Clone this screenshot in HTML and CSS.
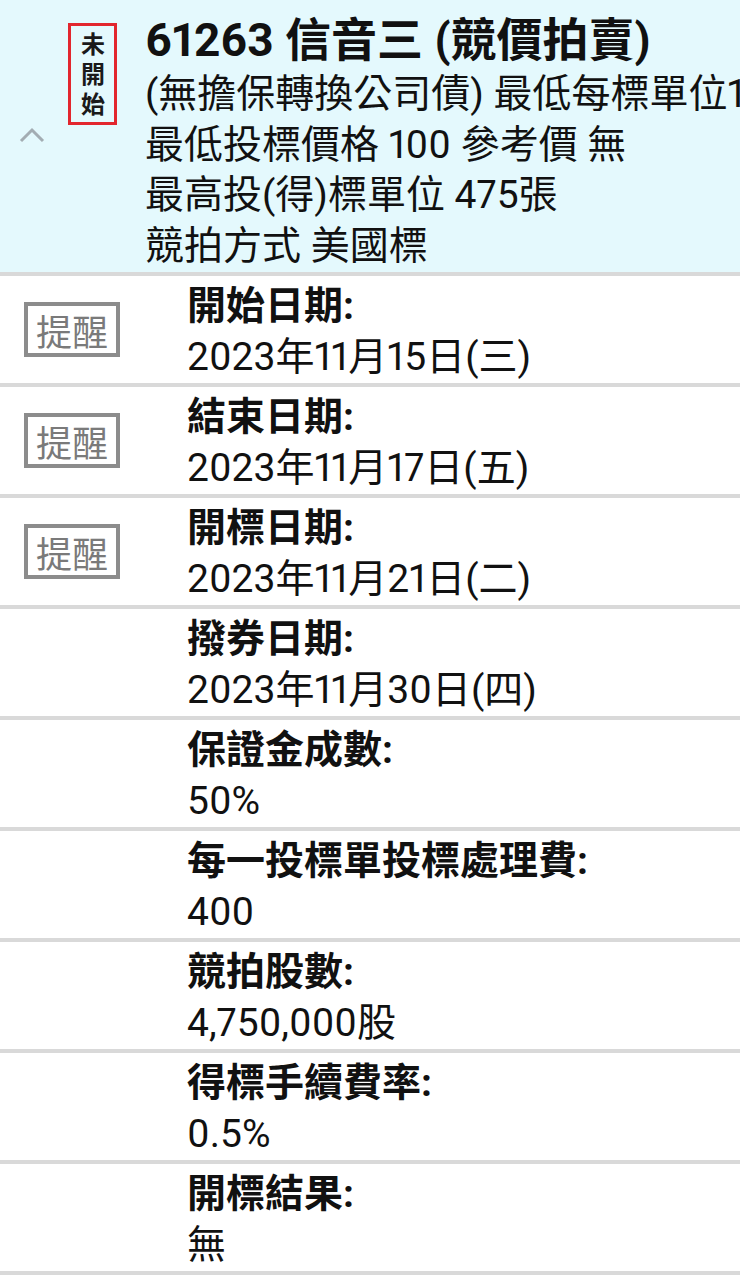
FILE: index.html
```html
<!DOCTYPE html>
<html lang="zh-Hant">
<head>
<meta charset="utf-8">
<link rel="stylesheet" href="styles.css">
</head>
<body>
<div class="page">
  <section class="header">
    <div class="header-side">
      <div class="badge"><span class="badge-text">未開始</span></div>
      <svg class="chevron" width="26" height="16" viewBox="0 0 26 16"><path d="M2 14 L13 3 L24 14" fill="none" stroke="#a3adb3" stroke-width="3"/></svg>
    </div>
    <div class="header-text">
      <div class="title">61263 信音三 (競價拍賣)</div>
      <div class="line">(無擔保轉換公司債) 最低每標單位1張</div>
      <div class="line">最低投標價格 100 參考價 無</div>
      <div class="line">最高投(得)標單位 475張</div>
      <div class="line">競拍方式 美國標</div>
    </div>
  </section>

  <div class="row">
    <div class="row-side"><span class="remind">提醒</span></div>
    <div class="row-text"><div class="label">開始日期:</div><div class="value">2023年11月15日(三)</div></div>
  </div>
  <div class="row">
    <div class="row-side"><span class="remind">提醒</span></div>
    <div class="row-text"><div class="label">結束日期:</div><div class="value">2023年11月17日(五)</div></div>
  </div>
  <div class="row">
    <div class="row-side"><span class="remind">提醒</span></div>
    <div class="row-text"><div class="label">開標日期:</div><div class="value">2023年11月21日(二)</div></div>
  </div>
  <div class="row">
    <div class="row-side"></div>
    <div class="row-text"><div class="label">撥券日期:</div><div class="value">2023年11月30日(四)</div></div>
  </div>
  <div class="row">
    <div class="row-side"></div>
    <div class="row-text"><div class="label">保證金成數:</div><div class="value">50%</div></div>
  </div>
  <div class="row">
    <div class="row-side"></div>
    <div class="row-text"><div class="label">每一投標單投標處理費:</div><div class="value">400</div></div>
  </div>
  <div class="row">
    <div class="row-side"></div>
    <div class="row-text"><div class="label">競拍股數:</div><div class="value">4,750,000股</div></div>
  </div>
  <div class="row">
    <div class="row-side"></div>
    <div class="row-text"><div class="label">得標手續費率:</div><div class="value">0.5%</div></div>
  </div>
  <div class="row">
    <div class="row-side"></div>
    <div class="row-text"><div class="label">開標結果:</div><div class="value">無</div></div>
  </div>
</div>
</body>
</html>
```
FILE: styles.css
```css
html, body {
  margin: 0;
  padding: 0;
  background: #ffffff;
}
body {
  font-family: Roboto, "Noto Sans CJK TC", sans-serif;
  font-variant-numeric: proportional-nums;
  color: #111111;
}
.page {
  width: 740px;
  overflow: hidden;
}
.header {
  display: flex;
  background: #e4f9fd;
  height: 272px;
  border-bottom: 4px solid #d9d9d9;
  overflow: hidden;
}
.header-side {
  width: 145px;
  flex: none;
  display: flex;
  flex-direction: column;
  align-items: flex-start;
}
.badge {
  margin: 23px 0 0 68px;
  width: 43px;
  height: 96px;
  border: 3px solid #e2262e;
  display: flex;
  align-items: flex-start;
  justify-content: center;
}
.badge-text {
  writing-mode: vertical-rl;
  white-space: nowrap;
  font-family: "Noto Sans CJK TC", sans-serif;
  font-size: 24px;
  font-weight: 700;
  letter-spacing: 6px;
  line-height: 1;
  color: #1a1a1a;
  padding-top: 6px;
}
.chevron {
  margin: 2px 0 0 19px;
  display: block;
}
.header-text {
  flex: 1;
  min-width: 0;
  padding-top: 11px;
  white-space: nowrap;
}
.title {
  font-size: 46px;
  font-weight: 700;
  line-height: 58px;
}
.line {
  font-size: 39px;
  line-height: 50.5px;
}
.row {
  display: flex;
  height: 107px;
  border-bottom: 4px solid #d9d9d9;
}
.row-side {
  width: 187px;
  flex: none;
  display: flex;
  align-items: center;
}
.remind {
  margin-left: 24px;
  box-sizing: border-box;
  width: 96px;
  height: 55px;
  border: 4px solid #8c8c8c;
  display: flex;
  align-items: center;
  justify-content: center;
  font-family: "Noto Sans CJK TC", serif;
  font-size: 36px;
  line-height: 1;
  color: #7a7a7a;
}
.row-text {
  padding-top: 5px;
  white-space: nowrap;
}
.label {
  font-size: 39px;
  font-weight: 700;
  line-height: 51px;
}
.value {
  font-size: 39px;
  line-height: 51px;
}
```
